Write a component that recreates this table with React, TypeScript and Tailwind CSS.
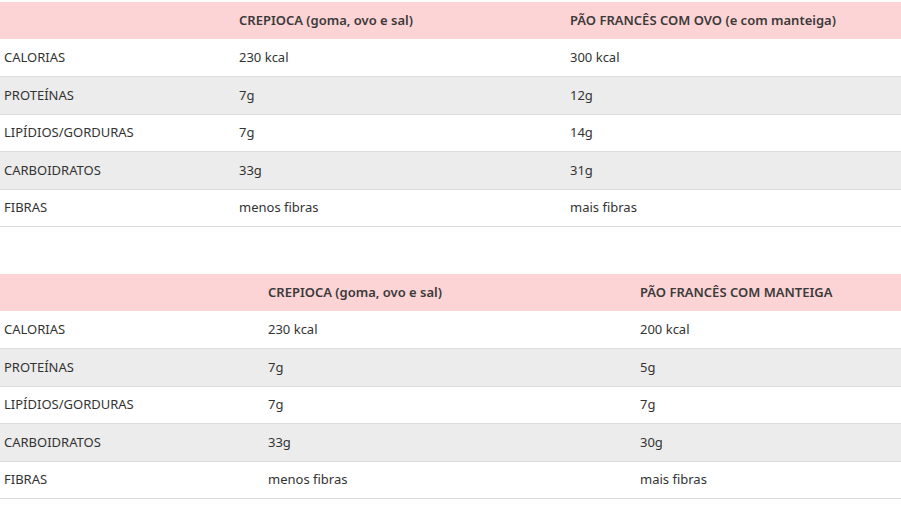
const rows1 = [
  ['CALORIAS', '230 kcal', '300 kcal'],
  ['PROTEÍNAS', '7g', '12g'],
  ['LIPÍDIOS/GORDURAS', '7g', '14g'],
  ['CARBOIDRATOS', '33g', '31g'],
  ['FIBRAS', 'menos fibras', 'mais fibras'],
];

const rows2 = [
  ['CALORIAS', '230 kcal', '200 kcal'],
  ['PROTEÍNAS', '7g', '5g'],
  ['LIPÍDIOS/GORDURAS', '7g', '7g'],
  ['CARBOIDRATOS', '33g', '30g'],
  ['FIBRAS', 'menos fibras', 'mais fibras'],
];

function NutriTable({ head, rows, widths }: { head: string[]; rows: string[][]; widths: string[] }) {
  return (
    <table className="w-full table-fixed border-collapse text-[13px] text-[#333333]">
      <colgroup>
        <col className={widths[0]} />
        <col className={widths[1]} />
        <col />
      </colgroup>
      <thead>
        <tr className="h-[37px] bg-[#fdd4d5]">
          <th className="px-1 text-left font-semibold text-[#3a3a3a]"></th>
          <th className="px-1 text-left font-semibold text-[#3a3a3a]">{head[0]}</th>
          <th className="px-1 text-left font-semibold text-[#3a3a3a]">{head[1]}</th>
        </tr>
      </thead>
      <tbody>
        {rows.map((r, i) => (
          <tr key={r[0]} className={`h-[37.5px] border-b border-[#dcdcdc] ${i % 2 === 1 ? 'bg-[#ececec]' : 'bg-white'}`}>
            {r.map((c, j) => (
              <td key={j} className="px-1 align-middle">{c}</td>
            ))}
          </tr>
        ))}
      </tbody>
    </table>
  );
}

export default function App() {
  return (
    <div className="w-[901px] h-[505px] overflow-hidden bg-white pt-[2px]" style={{ fontFamily: '"Noto Sans", "Open Sans", sans-serif' }}>
      <NutriTable
        head={['CREPIOCA (goma, ovo e sal)', 'PÃO FRANCÊS COM OVO (e com manteiga)']}
        rows={rows1}
        widths={['w-[235px]', 'w-[331px]']}
      />
      <div className="h-[47px]" />
      <NutriTable
        head={['CREPIOCA (goma, ovo e sal)', 'PÃO FRANCÊS COM MANTEIGA']}
        rows={rows2}
        widths={['w-[264px]', 'w-[372px]']}
      />
    </div>
  );
}
